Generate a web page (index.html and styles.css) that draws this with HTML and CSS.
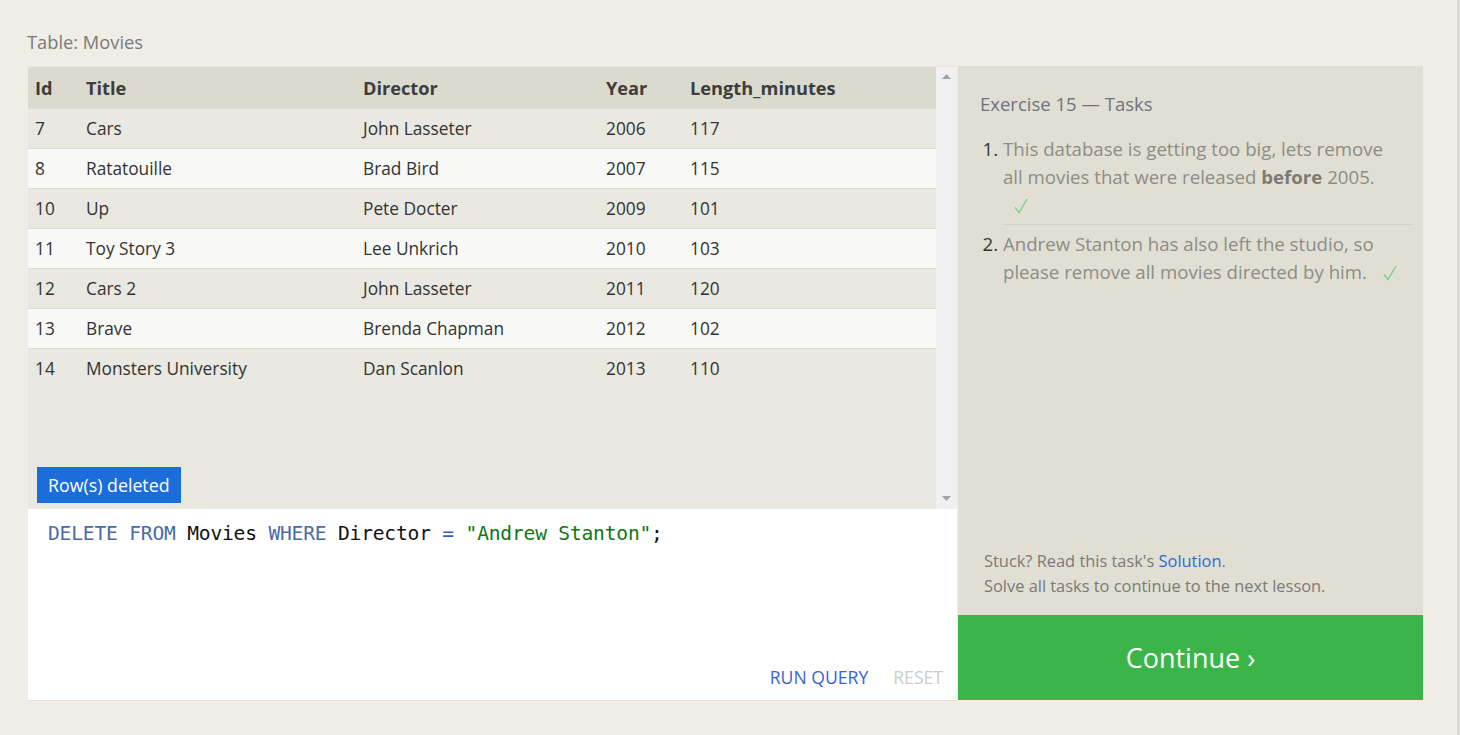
FILE: index.html
```html
<!DOCTYPE html>
<html>
<head>
<meta charset="utf-8">
<link rel="stylesheet" href="styles.css">
</head>
<body>
<div class="page">
  <div class="label">Table: Movies</div>
  <div class="main">
    <div class="left">
      <div class="results">
        <div class="table-wrap">
          <table class="tbl">
            <thead>
              <tr><th class="c-id">Id</th><th class="c-title">Title</th><th class="c-dir">Director</th><th class="c-year">Year</th><th>Length_minutes</th></tr>
            </thead>
            <tbody>
              <tr><td>7</td><td>Cars</td><td>John Lasseter</td><td>2006</td><td>117</td></tr>
              <tr><td>8</td><td>Ratatouille</td><td>Brad Bird</td><td>2007</td><td>115</td></tr>
              <tr><td>10</td><td>Up</td><td>Pete Docter</td><td>2009</td><td>101</td></tr>
              <tr><td>11</td><td>Toy Story 3</td><td>Lee Unkrich</td><td>2010</td><td>103</td></tr>
              <tr><td>12</td><td>Cars 2</td><td>John Lasseter</td><td>2011</td><td>120</td></tr>
              <tr><td>13</td><td>Brave</td><td>Brenda Chapman</td><td>2012</td><td>102</td></tr>
              <tr><td>14</td><td>Monsters University</td><td>Dan Scanlon</td><td>2013</td><td>110</td></tr>
            </tbody>
          </table>
          <div class="badge">Row(s) deleted</div>
        </div>
        <div class="scrollbar">
          <svg class="arrow" width="9" height="5" viewBox="0 0 9 5"><polygon points="0,5 9,5 4.5,0" fill="#a3a3a3"/></svg>
          <svg class="arrow" width="9" height="5" viewBox="0 0 9 5"><polygon points="0,0 9,0 4.5,5" fill="#a3a3a3"/></svg>
        </div>
      </div>
      <div class="editor">
        <div class="code"><span class="kw">DELETE</span> <span class="kw">FROM</span> Movies <span class="kw">WHERE</span> Director <span class="op">=</span> <span class="str">"Andrew Stanton"</span>;</div>
        <div class="actions">
          <span class="run">RUN QUERY</span>
          <span class="reset">RESET</span>
        </div>
      </div>
    </div>
    <div class="right">
      <div class="tasks">
        <h3 class="tasks-title">Exercise 15 — Tasks</h3>
        <ol class="task-list">
          <li><span class="task-text">This database is getting too big, lets remove all movies that were released <b>before</b> 2005. <svg class="check" width="14" height="16" viewBox="0 0 14 16"><path d="M1 9.5 L5 14.5 L13 1" fill="none" stroke="#7bcf8a" stroke-width="1.4"/></svg></span></li>
          <li><span class="task-text">Andrew Stanton has also left the studio, so please remove all movies directed by him. <svg class="check" width="14" height="16" viewBox="0 0 14 16"><path d="M1 9.5 L5 14.5 L13 1" fill="none" stroke="#7bcf8a" stroke-width="1.4"/></svg></span></li>
        </ol>
        <div class="help">
          <div>Stuck? Read this task's <span class="link">Solution</span>.</div>
          <div>Solve all tasks to continue to the next lesson.</div>
        </div>
      </div>
      <div class="continue">Continue ›</div>
    </div>
  </div>
</div>
</body>
</html>
```

FILE: styles.css
```css
html, body {
  margin: 0;
  padding: 0;
}
body {
  background: #efede6;
  font-family: "Open Sans", "Noto Sans", sans-serif;
  height: 735px;
  overflow: hidden;
  border-right: 3px solid #dcdad5;
  box-sizing: border-box;
}
.page {
  padding: 30px 0 0 28px;
}
.label {
  font-size: 18.3px;
  color: #7a7a78;
  height: 36px;
  line-height: 24px;
  margin-left: -1px;
}
.main {
  display: grid;
  grid-template-columns: 929px 466px;
  width: 1395px;
}
.left {
  display: flex;
  flex-direction: column;
}
.results {
  display: flex;
  height: 443px;
  border-top: 1px solid #e6e4dc;
  box-sizing: border-box;
}
.table-wrap {
  flex: 1;
  background: #e9e8e1;
  position: relative;
}
.tbl {
  width: 100%;
  border-collapse: collapse;
  font-size: 17.3px;
  color: #333;
}
.tbl th {
  background: #dbdacf;
  text-align: left;
  font-weight: 700;
  height: 41px;
  padding: 0 0 0 7px;
  color: #3d3d3d;
  font-size: 18.2px;
}
.tbl td {
  height: 39px;
  padding: 0 0 0 7px;
  border-top: 1px solid #dcdbd4;
}
.tbl tbody tr:nth-child(even) td {
  background: #f8f8f6;
}
.c-id { width: 44px; }
.c-title { width: 270px; }
.c-dir { width: 236px; }
.c-year { width: 77px; }
.badge {
  position: absolute;
  left: 9px;
  bottom: 6px;
  background: #1b6ddc;
  color: #fff;
  font-size: 17.8px;
  height: 36px;
  line-height: 36px;
  padding: 0 11px;
}
.scrollbar {
  width: 21px;
  background: #f0f0f0;
  display: flex;
  flex-direction: column;
  justify-content: space-between;
  align-items: center;
  padding: 7px 0 8px;
  box-sizing: border-box;
}
.editor {
  background: #fff;
  height: 192px;
  display: flex;
  flex-direction: column;
  justify-content: space-between;
  border-bottom: 1px solid #e3e1da;
  box-sizing: border-box;
}
.code {
  font-family: "DejaVu Sans Mono", "Liberation Mono", monospace;
  font-size: 19.6px;
  color: #111;
  padding: 13px 20px;
  letter-spacing: -0.2px;
}
.kw { color: #4a6aa8; }
.op { color: #3a5fc0; }
.str { color: #117711; }
.actions {
  display: flex;
  justify-content: flex-end;
  gap: 25px;
  padding: 0 14px 11px 0;
  font-size: 17.6px;
}
.run { color: #3b62d0; }
.reset { color: #cccccc; }
.right {
  display: flex;
  flex-direction: column;
  margin-left: 1px;
}
.tasks {
  background: #e1dfd4;
  height: 549px;
  padding: 24px 10px 0 22px;
  box-sizing: border-box;
  display: flex;
  flex-direction: column;
}
.tasks-title {
  margin: 0;
  font-weight: 400;
  font-size: 18.5px;
  color: #6e7480;
  line-height: 28px;
}
.task-list {
  margin: 17px 0 0 0;
  padding: 0 0 0 23px;
  font-size: 18.65px;
  line-height: 28px;
  color: #333;
  flex: 1;
}
.task-list li {
  padding-bottom: 5px;
  margin-bottom: 5px;
}
.task-list li:first-child {
  border-bottom: 1px solid #d4d2c8;
}
.task-text {
  display: block;
  padding-right: 13px;
  color: #8d8c87;
}
.task-text b { color: #7b7a75; }
.check {
  display: inline-block;
  vertical-align: -2px;
  margin-left: 11px;
}
.help {
  font-size: 16.4px;
  color: #7b7a76;
  line-height: 25px;
  padding-bottom: 17px;
  margin-left: 4px;
}
.link { color: #2a6ad8; }
.continue {
  background: #3bb54a;
  color: #fff;
  height: 85px;
  display: flex;
  align-items: center;
  justify-content: center;
  font-size: 27px;
}
```
